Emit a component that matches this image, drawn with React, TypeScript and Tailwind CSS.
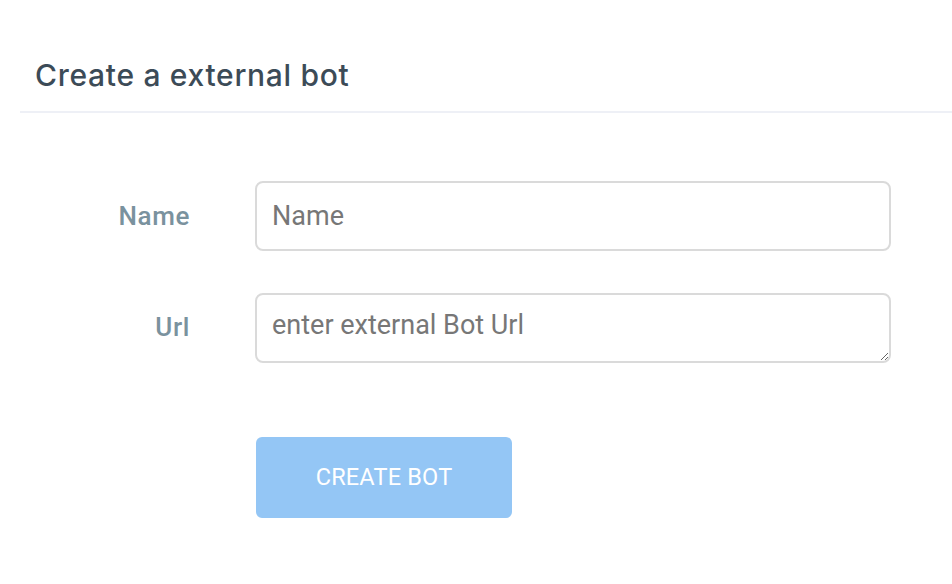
import { useState } from "react";

export default function App() {
    const [name, setName] = useState("");
    const [url, setUrl] = useState("");

    return (
        <div className="min-h-screen w-full bg-white">
            <div className="ml-[20px]">
                <div className="h-[113px] border-b-2 border-[#eef0f6] pl-[15px] pt-[55px]">
                    <h1 className="text-[30px] leading-[40px] font-medium text-[#3c4b57] font-['Inter',sans-serif] tracking-[0.7px]">
                        Create a external bot
                    </h1>
                </div>

                <form
                    className="pt-[68px] font-['Roboto',sans-serif]"
                    onSubmit={(e) => e.preventDefault()}
                >
                    <div className="flex items-center">
                        <label className="w-[170px] text-right text-[26px] font-medium tracking-[0.6px] text-[#7a929e]">
                            Name
                        </label>
                        <input
                            value={name}
                            onChange={(e) => setName(e.target.value)}
                            placeholder="Name"
                            className="ml-[65px] w-[636px] h-[70px] rounded-[8px] border-2 border-[#dadada] px-[15px] text-[27px] text-[#555] placeholder:text-[#777] outline-none"
                        />
                    </div>

                    <div className="flex items-start mt-[42px]">
                        <label className="w-[170px] text-right text-[26px] font-medium tracking-[0.6px] text-[#7a929e] pt-[15px]">
                            Url
                        </label>
                        <textarea
                            value={url}
                            onChange={(e) => setUrl(e.target.value)}
                            placeholder="enter external Bot Url"
                            className="ml-[65px] w-[636px] h-[70px] rounded-[8px] border-2 border-[#dadada] px-[15px] py-[14px] text-[27px] leading-[32px] text-[#555] placeholder:text-[#777] outline-none resize-y"
                        />
                    </div>

                    <div className="flex mt-[74px]">
                        <button
                            type="submit"
                            className="ml-[236px] w-[256px] h-[81px] rounded-[6px] bg-[#94c6f5] text-white text-[23.5px] tracking-[0.2px]"
                        >
                            CREATE BOT
                        </button>
                    </div>
                </form>
            </div>
        </div>
    );
}
